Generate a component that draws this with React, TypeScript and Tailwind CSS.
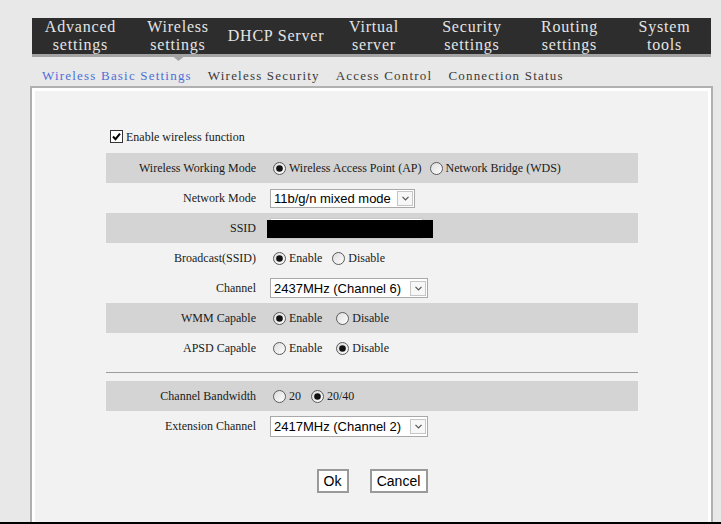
import React from "react";

const serif = { fontFamily: '"Liberation Serif", "Times New Roman", serif' } as const;
const sans = { fontFamily: '"Liberation Sans", Arial, sans-serif' } as const;

function Radio({ checked }: { checked?: boolean }) {
  return (
    <svg width="13" height="13" viewBox="0 0 13 13" className="shrink-0">
      <defs>
        <linearGradient id="rg" x1="0" y1="0" x2="1" y2="1">
          <stop offset="0" stopColor="#dcdcdc" />
          <stop offset="1" stopColor="#ffffff" />
        </linearGradient>
      </defs>
      <circle cx="6.5" cy="6.5" r="6" fill="url(#rg)" stroke="#5a5a5a" strokeWidth="1" />
      {checked && <circle cx="6.5" cy="6.5" r="3.3" fill="#111" />}
    </svg>
  );
}

function Opt({ label, checked, ml }: { label: string; checked?: boolean; ml: string }) {
  return (
    <span className={`flex items-center ${ml}`}>
      <Radio checked={checked} />
      <span className="ml-[3px]">{label}</span>
    </span>
  );
}

function Select({ value, w, h }: { value: string; w: string; h: string }) {
  return (
    <div
      className={`flex items-center justify-between bg-white border border-[#a9a9a9] ${w} ${h} text-[13px] text-black`}
      style={sans}
    >
      <span className="pl-[3px] leading-none whitespace-nowrap">{value}</span>
      <span className="mr-[1px] w-[16px] h-[15px] border border-[#c6c6c6] flex items-center justify-center bg-[#f7f7f7]">
        <svg width="7" height="5" viewBox="0 0 7 5">
          <polyline points="0.5,0.8 3.5,3.8 6.5,0.8" fill="none" stroke="#555" strokeWidth="1.2" />
        </svg>
      </span>
    </div>
  );
}

function Row({ label, gray, children }: { label: string; gray?: boolean; children: React.ReactNode }) {
  return (
    <div className={`flex items-center h-[30px] ${gray ? "bg-[#d4d4d4]" : ""}`}>
      <div className="w-[150px] text-right whitespace-nowrap">{label}</div>
      <div className="pl-[14px] flex items-center">{children}</div>
    </div>
  );
}

const navItems: { lines: string[]; w: string }[] = [
  { lines: ["Advanced", "settings"], w: "w-[97px]" },
  { lines: ["Wireless", "settings"], w: "w-[98px]" },
  { lines: ["DHCP Server"], w: "w-[98px]" },
  { lines: ["Virtual", "server"], w: "w-[98px]" },
  { lines: ["Security", "settings"], w: "w-[98px]" },
  { lines: ["Routing", "settings"], w: "w-[97px]" },
  { lines: ["System", "tools"], w: "w-[93px]" },
];

export default function App() {
  return (
    <div className="w-[721px] h-[524px] bg-[#e8e8e8] flex flex-col overflow-hidden" style={serif}>
      <div className="pt-[18px] pl-[32px]">
        <div className="relative w-[679px] h-[39px] bg-[#2d2d2d] border-b-[3px] border-[#a3a3a3] flex">
          {navItems.map((n, i) => (
            <div
              key={i}
              className={`${n.w} shrink-0 flex flex-col items-center justify-center text-center text-[16px] leading-[18px] tracking-[0.8px] text-[#e4e4e4]`}
            >
              {n.lines.map((l, j) => (
                <span key={j}>{l}</span>
              ))}
            </div>
          ))}
          <svg width="17" height="7" viewBox="0 0 17 7" className="absolute left-[138px] top-[36px]">
            <polygon points="0,0 17,0 8.5,7" fill="#a3a3a3" />
          </svg>
        </div>
      </div>
      <div className="h-[29px] pl-[42px] pt-[11px] flex gap-[16px] text-[13px] leading-[15px] tracking-[1.2px] text-[#3a3a3a]">
        <span className="text-[#4f6fd8]">Wireless Basic Settings</span>
        <span>Wireless Security</span>
        <span>Access Control</span>
        <span>Connection Status</span>
      </div>
      <div className="ml-[30px] w-[683px] flex-1 border-2 border-b-0 border-[#b0b0b0]">
        <div className="h-full border-[3px] border-b-0 border-white bg-[#f2f2f2] text-[12px] text-[#1a1a1a]">
          <div className="pt-[39px] pl-[75px] flex items-center h-[52px]">
            <svg width="13" height="13" viewBox="0 0 13 13" className="shrink-0">
              <rect x="0.5" y="0.5" width="12" height="12" fill="#fff" stroke="#333" />
              <polyline points="3,6.5 5.5,9.2 10,3.6" fill="none" stroke="#000" strokeWidth="2" />
            </svg>
            <span className="ml-[3px]">Enable wireless function</span>
          </div>
          <div className="ml-[71px] w-[532px] mt-[10px]">
            <Row label="Wireless Working Mode" gray>
              <Opt label="Wireless Access Point (AP)" checked ml="ml-[3px]" />
              <Opt label="Network Bridge (WDS)" ml="ml-[8px]" />
            </Row>
            <Row label="Network Mode">
              <Select value="11b/g/n mixed mode" w="w-[145px]" h="h-[19px]" />
            </Row>
            <Row label="SSID" gray>
              <div className="relative">
                <div className="w-[153px] h-[21px] bg-white border border-[#c8c8c8]" />
                <div className="absolute left-[-3px] top-[2px] w-[166px] h-[18px] bg-black" />
              </div>
            </Row>
            <Row label="Broadcast(SSID)">
              <Opt label="Enable" checked ml="ml-[3px]" />
              <Opt label="Disable" ml="ml-[10px]" />
            </Row>
            <Row label="Channel">
              <Select value="2437MHz (Channel 6)" w="w-[158px]" h="h-[20px]" />
            </Row>
            <Row label="WMM Capable" gray>
              <Opt label="Enable" checked ml="ml-[3px]" />
              <Opt label="Disable" ml="ml-[14px]" />
            </Row>
            <Row label="APSD Capable">
              <Opt label="Enable" ml="ml-[3px]" />
              <Opt label="Disable" checked ml="ml-[14px]" />
            </Row>
            <div className="h-[18px] flex flex-col justify-center">
              <div className="h-px bg-[#9c9c9c]" />
            </div>
            <Row label="Channel Bandwidth" gray>
              <Opt label="20" ml="ml-[3px]" />
              <Opt label="20/40" checked ml="ml-[10px]" />
            </Row>
            <Row label="Extension Channel">
              <Select value="2417MHz (Channel 2)" w="w-[158px]" h="h-[21px]" />
            </Row>
            <div className="flex justify-center gap-[21px] mt-[28px]" style={sans}>
              <button className="w-[32px] h-[24px] bg-white border-2 border-[#9a9a9a] text-[14px] text-black leading-none">
                Ok
              </button>
              <button className="w-[58px] h-[24px] bg-white border-2 border-[#9a9a9a] text-[14px] text-black leading-none">
                Cancel
              </button>
            </div>
          </div>
        </div>
      </div>
      <div className="h-[2px] bg-black shrink-0" />
    </div>
  );
}
